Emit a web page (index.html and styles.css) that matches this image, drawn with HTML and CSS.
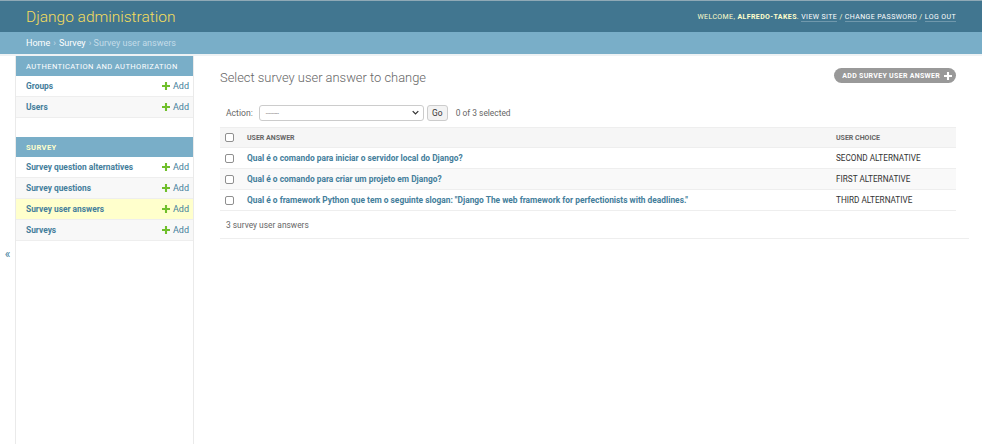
FILE: index.html
```html
<!DOCTYPE html>
<html lang="pt">
<head>
<meta charset="utf-8">
<title>Select survey user answer to change | Django site admin</title>
<link rel="stylesheet" href="styles.css">
</head>
<body>
<div class="header">
  <div class="branding">Django administration</div>
  <div class="user-tools">Welcome, <strong>alfredo-takes</strong>. <a class="ut-link">View site</a> / <a class="ut-link">Change password</a> / <a class="ut-link">Log out</a></div>
</div>
<div class="breadcrumbs"><a class="bc-link">Home</a> › <a class="bc-link">Survey</a> › Survey user answers</div>
<div class="main">
  <div class="toggle"><span class="toggle-glyph">«</span></div>
  <nav class="sidebar">
    <div class="module">
      <div class="caption">Authentication and Authorization</div>
      <div class="row"><a class="model">Groups</a><a class="addlink"><svg class="plus" viewBox="0 0 10 10"><path d="M3.7 0h2.6v3.7H10v2.6H6.3V10H3.7V6.3H0V3.7h3.7z"/></svg>Add</a></div>
      <div class="row alt"><a class="model">Users</a><a class="addlink"><svg class="plus" viewBox="0 0 10 10"><path d="M3.7 0h2.6v3.7H10v2.6H6.3V10H3.7V6.3H0V3.7h3.7z"/></svg>Add</a></div>
    </div>
    <div class="module">
      <div class="caption current-app">Survey</div>
      <div class="row"><a class="model">Survey question alternatives</a><a class="addlink"><svg class="plus" viewBox="0 0 10 10"><path d="M3.7 0h2.6v3.7H10v2.6H6.3V10H3.7V6.3H0V3.7h3.7z"/></svg>Add</a></div>
      <div class="row alt"><a class="model">Survey questions</a><a class="addlink"><svg class="plus" viewBox="0 0 10 10"><path d="M3.7 0h2.6v3.7H10v2.6H6.3V10H3.7V6.3H0V3.7h3.7z"/></svg>Add</a></div>
      <div class="row current"><a class="model">Survey user answers</a><a class="addlink"><svg class="plus" viewBox="0 0 10 10"><path d="M3.7 0h2.6v3.7H10v2.6H6.3V10H3.7V6.3H0V3.7h3.7z"/></svg>Add</a></div>
      <div class="row alt"><a class="model">Surveys</a><a class="addlink"><svg class="plus" viewBox="0 0 10 10"><path d="M3.7 0h2.6v3.7H10v2.6H6.3V10H3.7V6.3H0V3.7h3.7z"/></svg>Add</a></div>
    </div>
  </nav>
  <div class="content">
    <div class="title-row">
      <h1 class="title">Select survey user answer to change</h1>
      <a class="addbtn">Add survey user answer <svg class="addbtn-plus" viewBox="0 0 10 10"><path d="M3.7 0h2.6v3.7H10v2.6H6.3V10H3.7V6.3H0V3.7h3.7z"/></svg></a>
    </div>
    <div class="actions">
      <span class="action-label">Action:</span>
      <div class="select"><span class="select-text">---------</span><svg class="chev" viewBox="0 0 10 6"><path d="M1 1l4 4 4-4" fill="none" stroke="#333" stroke-width="1.8"/></svg></div>
      <span class="go">Go</span>
      <span class="counter">0 of 3 selected</span>
    </div>
    <div class="results">
      <div class="trow head">
        <span class="cell-check"><span class="cb"></span></span>
        <span class="cell-answer">User answer</span>
        <span class="cell-choice">User choice</span>
      </div>
      <div class="trow">
        <span class="cell-check"><span class="cb"></span></span>
        <a class="cell-answer link">Qual é o comando para iniciar o servidor local do Django?</a>
        <span class="cell-choice val">SECOND ALTERNATIVE</span>
      </div>
      <div class="trow alt">
        <span class="cell-check"><span class="cb"></span></span>
        <a class="cell-answer link">Qual é o comando para criar um projeto em Django?</a>
        <span class="cell-choice val">FIRST ALTERNATIVE</span>
      </div>
      <div class="trow">
        <span class="cell-check"><span class="cb"></span></span>
        <a class="cell-answer link">Qual é o framework Python que tem o seguinte slogan: "Django The web framework for perfectionists with deadlines."</a>
        <span class="cell-choice val">THIRD ALTERNATIVE</span>
      </div>
    </div>
    <p class="paginator">3 survey user answers</p>
  </div>
</div>
</body>
</html>
```

FILE: styles.css
```css
* { box-sizing: border-box; }
html, body { margin: 0; padding: 0; }
body {
  font-family: Roboto, "Liberation Sans", sans-serif;
  font-size: 8.4px;
  color: #333;
  background: #fff;
  height: 444px;
  overflow: hidden;
  display: flex;
  flex-direction: column;
}
a { text-decoration: none; }

.header {
  height: 32px;
  background: #417690;
  border-top: 1px solid #8fa9b6;
  display: flex;
  align-items: center;
  justify-content: space-between;
  padding: 0 26px;
}
.branding {
  font-size: 15.5px;
  font-weight: 300;
  color: #f5dd5d;
}
.user-tools {
  font-size: 7px;
  letter-spacing: 0.4px;
  text-transform: uppercase;
  color: #ffc;
  margin-top: 1px;
}
.user-tools strong { font-weight: 700; }
.ut-link {
  color: #fff;
  border-bottom: 1px solid rgba(255,255,255,0.25);
}

.breadcrumbs {
  height: 24px;
  background: #79aec8;
  padding: 0 26px;
  display: flex;
  align-items: center;
  gap: 3px;
  color: #c4dce8;
  font-size: 9px;
  border-bottom: 2px solid #eef2f4;
}
.bc-link { color: #fff; }

.main {
  flex: 1;
  display: flex;
}
.toggle {
  width: 16px;
  border-right: 1px solid #eaeaea;
  display: flex;
  justify-content: center;
  padding-top: 192px;
}
.toggle-glyph {
  color: #447e9b;
  font-size: 12px;
  line-height: 12px;
}
.sidebar {
  width: 178px;
  border-right: 1px solid #eaeaea;
}
.module { margin-bottom: 19px; }
.caption {
  height: 20px;
  background: #79aec8;
  color: #fff;
  font-size: 7.55px;
  letter-spacing: 0.4px;
  text-transform: uppercase;
  display: flex;
  align-items: center;
  padding-left: 10px;
}
.caption.current-app { color: #ffc; font-weight: 700; }
.row {
  height: 21px;
  display: flex;
  align-items: center;
  justify-content: space-between;
  padding: 0 4px 0 10px;
  border-bottom: 1px solid #eee;
  background: #fff;
}
.row.alt { background: #f8f8f8; }
.row.current { background: #ffc; }
.model { color: #447e9b; font-weight: 700; }
.addlink {
  color: #447e9b;
  font-size: 9px;
  display: flex;
  align-items: center;
  gap: 3px;
}
.plus { width: 8px; height: 8px; fill: #70bf2b; }

.content {
  flex: 1;
  padding: 0 13px 0 26px;
}
.title-row {
  display: flex;
  justify-content: space-between;
  align-items: flex-start;
  padding-right: 13px;
  height: 43px;
}
.title {
  margin: 14px 0 0;
  font-size: 12.9px;
  font-weight: 300;
  color: #666;
}
.addbtn {
  margin-top: 12px;
  height: 15px;
  flex-shrink: 0;
  border-radius: 8px;
  background: #999;
  color: #fff;
  font-size: 7px;
  font-weight: 700;
  letter-spacing: 0.3px;
  text-transform: uppercase;
  display: flex;
  align-items: center;
  gap: 4px;
  padding: 0 4px 0 8px;
}
.addbtn-plus { width: 8px; height: 8px; fill: #fff; }

.actions {
  display: flex;
  align-items: center;
  height: 27px;
  padding-left: 6px;
  margin-bottom: 1px;
}
.action-label { color: #666; margin-right: 6px; font-size: 8.6px; }
.select {
  width: 165px;
  height: 16px;
  border: 1px solid #ccc;
  border-radius: 3px;
  display: flex;
  align-items: center;
  justify-content: space-between;
  padding: 0 4px 0 6px;
  background: #fff;
}
.select-text { font-size: 5px; color: #333; letter-spacing: 0.1px; }
.chev { width: 7px; height: 5px; }
.go {
  margin-left: 3px;
  height: 16px;
  width: 21px;
  border: 1px solid #ccc;
  border-radius: 3px;
  background: #f3f3f3;
  display: flex;
  align-items: center;
  justify-content: center;
  color: #333;
}
.counter { margin-left: 8px; color: #666; }

.results { margin-right: 13px; }
.trow {
  display: flex;
  align-items: center;
  height: 21px;
  border-bottom: 1px solid #eee;
  background: #fff;
}
.trow.alt { background: #f9f9f9; }
.trow.head {
  background: #f6f6f6;
  border-top: 1px solid #eee;
  height: 21px;
}
.cell-check { width: 27px; display: flex; padding-left: 5px; }
.cb {
  width: 9px;
  height: 9px;
  border: 1px solid #8f8f8f;
  border-radius: 2px;
  background: #fff;
}
.cell-answer { flex: 1; }
.cell-choice { width: 120px; }
.head .cell-answer, .head .cell-choice {
  font-size: 7px;
  font-weight: 700;
  color: #666;
  text-transform: uppercase;
}
.link { color: #447e9b; font-weight: 700; }
.val { color: #333; font-size: 8.2px; }

.paginator {
  margin: 0;
  height: 28px;
  padding-left: 6px;
  display: flex;
  align-items: center;
  color: #666;
  border-bottom: 1px solid #eee;
}
```
